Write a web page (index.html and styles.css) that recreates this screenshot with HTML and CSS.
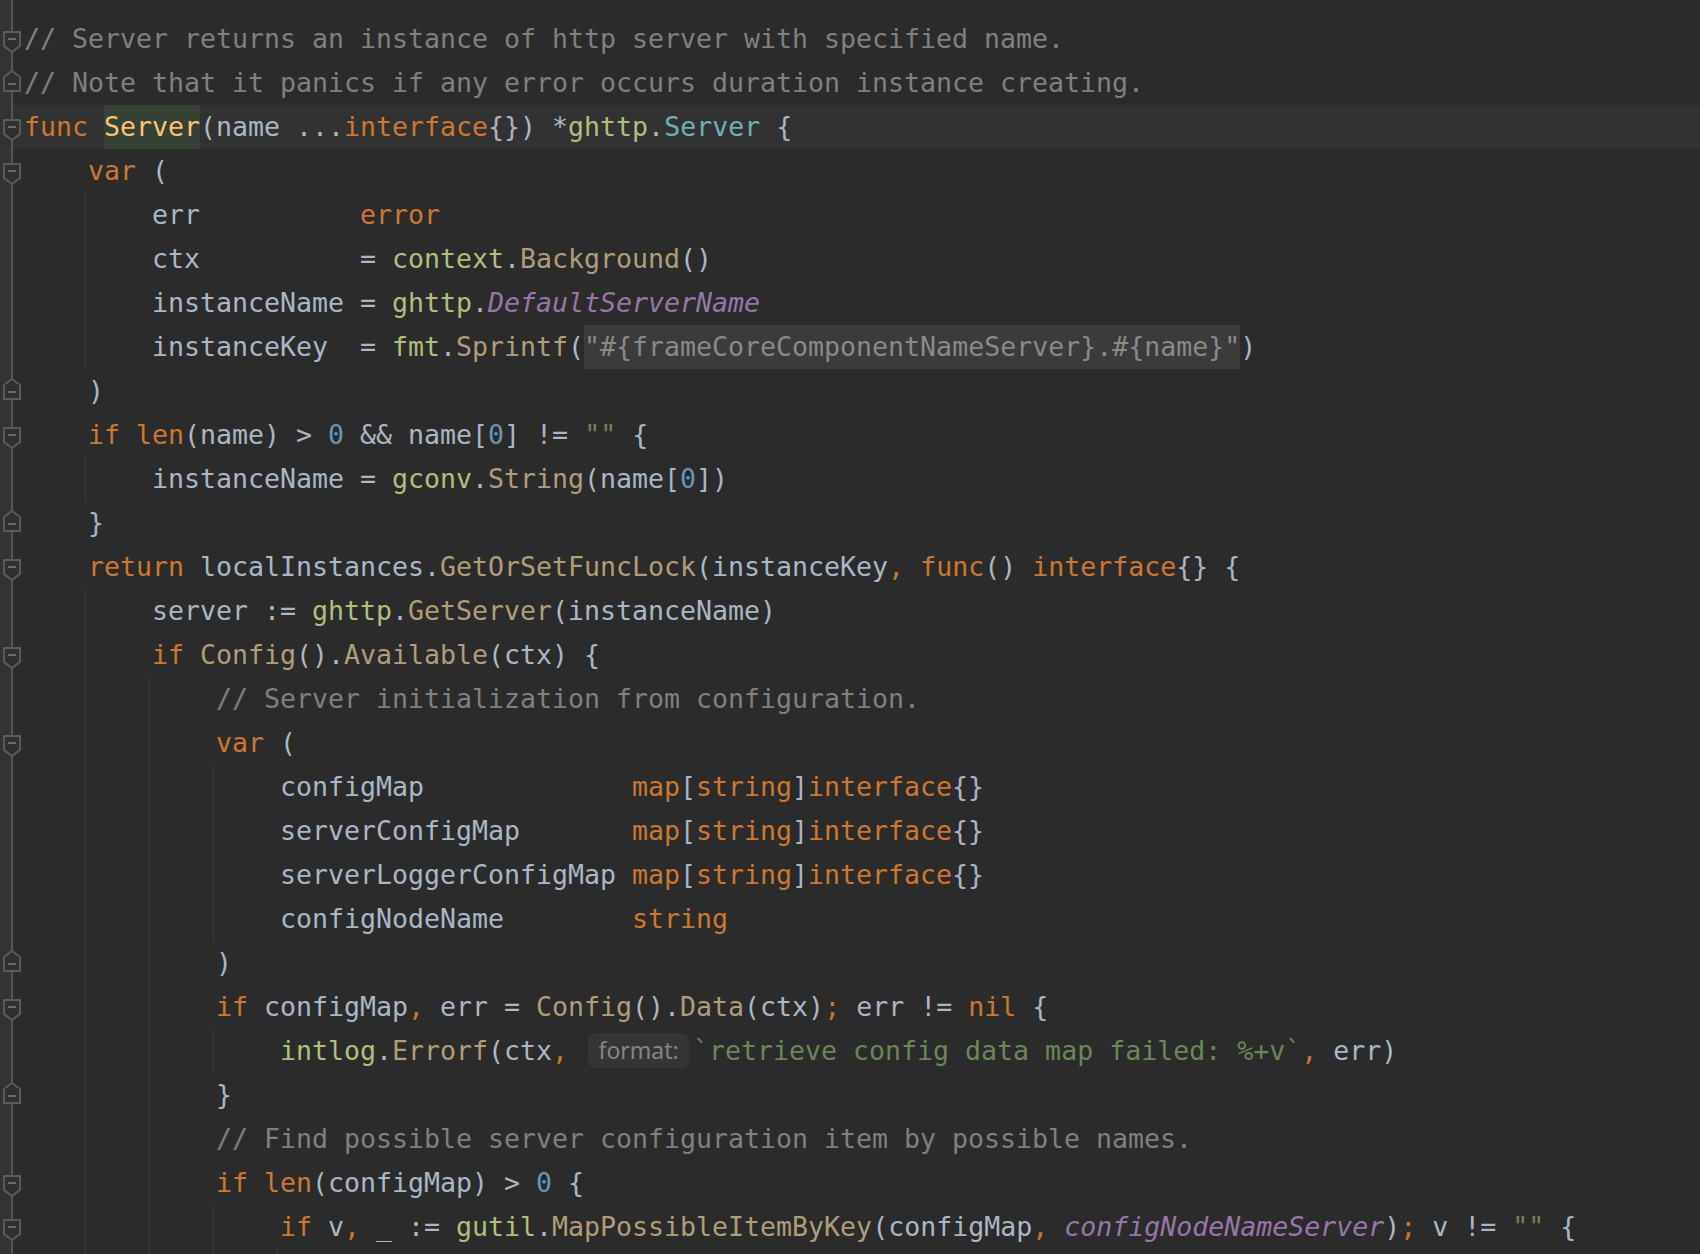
FILE: index.html
```html
<!DOCTYPE html>
<html lang="en">
<head>
    <meta charset="UTF-8">
    <title>server.go</title>
    <link rel="stylesheet" href="styles.css">
</head>
<body>

<div class="editor">
    <!-- 1 -->
    <div class="ln"><div class="gut"><svg class="fs" width="18" height="24"><path d="M1 1H17V15L9 21L1 15Z"/><line x1="5" y1="8" x2="13" y2="8"/></svg></div><div class="code"><span class="c">// Server returns an instance of http server with specified name.</span></div></div>
    <!-- 2 -->
    <div class="ln"><div class="gut"><svg class="fe" width="18" height="24"><path d="M1 21H17V7L9 1L1 7Z"/><line x1="5" y1="14" x2="13" y2="14"/></svg></div><div class="code"><span class="c">// Note that it panics if any error occurs duration instance creating.</span></div></div>
    <!-- 3 -->
    <div class="ln cur"><div class="gut"><svg class="fs" width="18" height="24"><path d="M1 1H17V15L9 21L1 15Z"/><line x1="5" y1="8" x2="13" y2="8"/></svg></div><div class="code"><span class="k">func</span> <span class="d hl">Server</span>(name ...<span class="k">interface</span>{}) *<span class="p">ghttp</span>.<span class="t">Server</span> {</div></div>
    <!-- 4 -->
    <div class="ln"><div class="gut"><svg class="fs" width="18" height="24"><path d="M1 1H17V15L9 21L1 15Z"/><line x1="5" y1="8" x2="13" y2="8"/></svg></div><div class="code"><span class="ind"></span><span class="k">var</span> (</div></div>
    <!-- 5 -->
    <div class="ln"><div class="gut"></div><div class="code"><span class="ind g"></span><span class="ind"></span>err          <span class="k">error</span></div></div>
    <div class="ln"><div class="gut"></div><div class="code"><span class="ind g"></span><span class="ind"></span>ctx          = <span class="p">context</span>.<span class="f">Background</span>()</div></div>
    <div class="ln"><div class="gut"></div><div class="code"><span class="ind g"></span><span class="ind"></span>instanceName = <span class="p">ghttp</span>.<span class="i">DefaultServerName</span></div></div>
    <div class="ln"><div class="gut"></div><div class="code"><span class="ind g"></span><span class="ind"></span>instanceKey  = <span class="p">fmt</span>.<span class="f">Sprintf</span>(<span class="q">"#{frameCoreComponentNameServer}.#{name}"</span>)</div></div>
    <!-- 9 -->
    <div class="ln"><div class="gut"><svg class="fe" width="18" height="24"><path d="M1 21H17V7L9 1L1 7Z"/><line x1="5" y1="14" x2="13" y2="14"/></svg></div><div class="code"><span class="ind"></span>)</div></div>
    <div class="ln"><div class="gut"><svg class="fs" width="18" height="24"><path d="M1 1H17V15L9 21L1 15Z"/><line x1="5" y1="8" x2="13" y2="8"/></svg></div><div class="code"><span class="ind"></span><span class="k">if</span> <span class="k">len</span>(name) &gt; <span class="n">0</span> &amp;&amp; name[<span class="n">0</span>] != <span class="s">""</span> {</div></div>
    <div class="ln"><div class="gut"></div><div class="code"><span class="ind g"></span><span class="ind"></span>instanceName = <span class="p">gconv</span>.<span class="f">String</span>(name[<span class="n">0</span>])</div></div>
    <div class="ln"><div class="gut"><svg class="fe" width="18" height="24"><path d="M1 21H17V7L9 1L1 7Z"/><line x1="5" y1="14" x2="13" y2="14"/></svg></div><div class="code"><span class="ind"></span>}</div></div>
    <!-- 13 -->
    <div class="ln"><div class="gut"><svg class="fs" width="18" height="24"><path d="M1 1H17V15L9 21L1 15Z"/><line x1="5" y1="8" x2="13" y2="8"/></svg></div><div class="code"><span class="ind"></span><span class="k">return</span> localInstances.<span class="f">GetOrSetFuncLock</span>(instanceKey<span class="k">,</span> <span class="k">func</span>() <span class="k">interface</span>{} {</div></div>
    <div class="ln"><div class="gut"></div><div class="code"><span class="ind g"></span><span class="ind"></span>server := <span class="p">ghttp</span>.<span class="f">GetServer</span>(instanceName)</div></div>
    <div class="ln"><div class="gut"><svg class="fs" width="18" height="24"><path d="M1 1H17V15L9 21L1 15Z"/><line x1="5" y1="8" x2="13" y2="8"/></svg></div><div class="code"><span class="ind g"></span><span class="ind"></span><span class="k">if</span> <span class="f">Config</span>().<span class="f">Available</span>(ctx) {</div></div>
    <div class="ln"><div class="gut"></div><div class="code"><span class="ind g"></span><span class="ind g"></span><span class="ind"></span><span class="c">// Server initialization from configuration.</span></div></div>
    <!-- 17 -->
    <div class="ln"><div class="gut"><svg class="fs" width="18" height="24"><path d="M1 1H17V15L9 21L1 15Z"/><line x1="5" y1="8" x2="13" y2="8"/></svg></div><div class="code"><span class="ind g"></span><span class="ind g"></span><span class="ind"></span><span class="k">var</span> (</div></div>
    <div class="ln"><div class="gut"></div><div class="code"><span class="ind g"></span><span class="ind g"></span><span class="ind g"></span><span class="ind"></span>configMap             <span class="k">map</span>[<span class="k">string</span>]<span class="k">interface</span>{}</div></div>
    <div class="ln"><div class="gut"></div><div class="code"><span class="ind g"></span><span class="ind g"></span><span class="ind g"></span><span class="ind"></span>serverConfigMap       <span class="k">map</span>[<span class="k">string</span>]<span class="k">interface</span>{}</div></div>
    <div class="ln"><div class="gut"></div><div class="code"><span class="ind g"></span><span class="ind g"></span><span class="ind g"></span><span class="ind"></span>serverLoggerConfigMap <span class="k">map</span>[<span class="k">string</span>]<span class="k">interface</span>{}</div></div>
    <div class="ln"><div class="gut"></div><div class="code"><span class="ind g"></span><span class="ind g"></span><span class="ind g"></span><span class="ind"></span>configNodeName        <span class="k">string</span></div></div>
    <!-- 22 -->
    <div class="ln"><div class="gut"><svg class="fe" width="18" height="24"><path d="M1 21H17V7L9 1L1 7Z"/><line x1="5" y1="14" x2="13" y2="14"/></svg></div><div class="code"><span class="ind g"></span><span class="ind g"></span><span class="ind"></span>)</div></div>
    <div class="ln"><div class="gut"><svg class="fs" width="18" height="24"><path d="M1 1H17V15L9 21L1 15Z"/><line x1="5" y1="8" x2="13" y2="8"/></svg></div><div class="code"><span class="ind g"></span><span class="ind g"></span><span class="ind"></span><span class="k">if</span> configMap<span class="k">,</span> err = <span class="f">Config</span>().<span class="f">Data</span>(ctx)<span class="k">;</span> err != <span class="k">nil</span> {</div></div>
    <div class="ln"><div class="gut"></div><div class="code"><span class="ind g"></span><span class="ind g"></span><span class="ind g"></span><span class="ind"></span><span class="p">intlog</span>.<span class="f">Errorf</span>(ctx<span class="k">,</span> <span class="hint">format:</span><span class="s">`retrieve config data map failed: %+v`</span><span class="k">,</span> err)</div></div>
    <div class="ln"><div class="gut"><svg class="fe" width="18" height="24"><path d="M1 21H17V7L9 1L1 7Z"/><line x1="5" y1="14" x2="13" y2="14"/></svg></div><div class="code"><span class="ind g"></span><span class="ind g"></span><span class="ind"></span>}</div></div>
    <div class="ln"><div class="gut"></div><div class="code"><span class="ind g"></span><span class="ind g"></span><span class="ind"></span><span class="c">// Find possible server configuration item by possible names.</span></div></div>
    <!-- 27 -->
    <div class="ln"><div class="gut"><svg class="fs" width="18" height="24"><path d="M1 1H17V15L9 21L1 15Z"/><line x1="5" y1="8" x2="13" y2="8"/></svg></div><div class="code"><span class="ind g"></span><span class="ind g"></span><span class="ind"></span><span class="k">if</span> <span class="k">len</span>(configMap) &gt; <span class="n">0</span> {</div></div>
    <div class="ln"><div class="gut"><svg class="fs" width="18" height="24"><path d="M1 1H17V15L9 21L1 15Z"/><line x1="5" y1="8" x2="13" y2="8"/></svg></div><div class="code"><span class="ind g"></span><span class="ind g"></span><span class="ind g"></span><span class="ind"></span><span class="k">if</span> v<span class="k">,</span> _ := <span class="p">gutil</span>.<span class="f">MapPossibleItemByKey</span>(configMap<span class="k">,</span> <span class="i">configNodeNameServer</span>)<span class="k">;</span> v != <span class="s">""</span> {</div></div>
    <div class="ln"><div class="gut"></div><div class="code"><span class="ind g"></span><span class="ind g"></span><span class="ind g"></span><span class="ind g"></span><span class="ind"></span></div></div>
</div>

</body>
</html>
```

FILE: styles.css
```css
* {
    box-sizing: border-box;
}
html, body {
    margin: 0;
    height: 100%;
    overflow: hidden;
}
body {
    background-color: #2b2b2b;
    color: #a9b7c6;
    font-family: "DejaVu Sans Mono", "Liberation Mono", monospace;
    font-size: 26.58px;
}
.editor {
    height: 1254px;
    padding-top: 17px;
    background:
        linear-gradient(#555555, #555555) 11px 0 / 2px 100% no-repeat,
        linear-gradient(#313335, #313335) 0 0 / 13px 100% no-repeat,
        #2b2b2b;
}
.ln {
    display: flex;
    height: 44px;
}
.ln.cur {
    background: linear-gradient(to right, transparent 13px, #323232 13px);
}
.gut {
    width: 24px;
    flex-shrink: 0;
}
.gut svg {
    display: block;
    margin-left: 3px;
}
.gut svg path {
    fill: #2f3031;
    stroke: #5a5a5a;
    stroke-width: 2;
}
.gut svg line {
    stroke: #6a6a6a;
    stroke-width: 2;
}
.gut .fs {
    margin-top: 14px;
}
.gut .fe {
    margin-top: 9px;
}
.code {
    flex: 1;
    white-space: pre;
    line-height: 44px;
}
.ind {
    display: inline-block;
    width: 64px;
    height: 44px;
    vertical-align: top;
}
.ind.g {
    background: linear-gradient(#3b3b3b, #3b3b3b) 61px 0 / 1px 100% no-repeat;
}

/* syntax colours */
.k { color: #cc7832; }
.c { color: #808080; }
.p { color: #afbf7e; }
.f { color: #b09d79; }
.d { color: #ffc66d; }
.t { color: #6fafbd; }
.n { color: #6897bb; }
.s { color: #6a8759; }
.i { color: #9876aa; font-style: italic; }
.hl {
    display: inline-block;
    height: 44px;
    vertical-align: top;
    background-color: #344134;
}
.q {
    display: inline-block;
    height: 44px;
    vertical-align: top;
    background-color: #3b3b3b;
    color: #8a8a8a;
}
.hint {
    display: inline-block;
    width: 101px;
    height: 35px;
    margin: 4px 4px 0 4px;
    vertical-align: top;
    border-radius: 8px;
    background-color: #353535;
    color: #858585;
    font-family: "Noto Sans", sans-serif;
    font-size: 23px;
    line-height: 34px;
    text-align: center;
}
```
